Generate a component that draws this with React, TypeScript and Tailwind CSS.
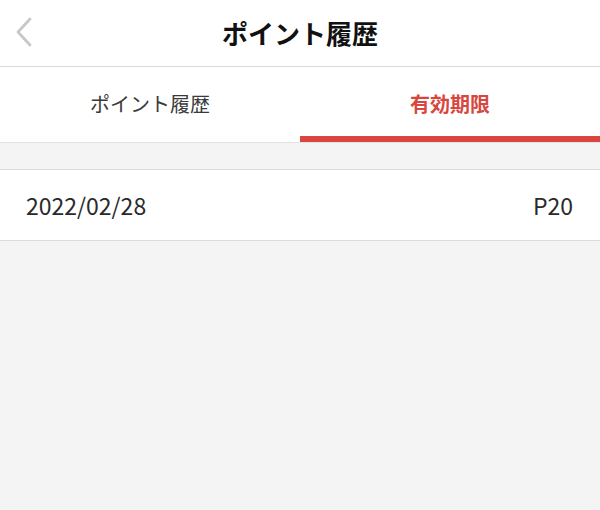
export default function App() {
  const font = { fontFamily: '"Noto Sans CJK JP", "Noto Sans", sans-serif' };

  return (
    <div className="w-[600px] h-[510px] bg-[#f4f4f4] flex flex-col" style={font}>
      {/* header */}
      <header className="h-[67px] bg-white border-b border-[#d9d9d9] flex items-center relative">
        <button className="absolute left-[12px] top-[15px] w-[24px] h-[34px] flex items-center justify-center">
          <svg width="20" height="30" viewBox="0 0 20 30" fill="none">
            <path d="M16 2 L4 15 L16 28" stroke="#c8c8c8" strokeWidth="2.8" strokeLinecap="round" strokeLinejoin="round" />
          </svg>
        </button>
        <h1 className="flex-1 text-center text-[26px] font-bold text-[#111] leading-none">ポイント履歴</h1>
      </header>

      {/* tabs */}
      <nav className="h-[76px] bg-white border-b border-[#e2e2e2] flex">
        <div className="flex-1 flex items-center justify-center text-[20px] text-[#3a3a3a] pb-[2px]">
          ポイント履歴
        </div>
        <div className="flex-1 flex flex-col">
          <div className="flex-1 flex items-center justify-center text-[20px] font-bold text-[#d8463e] pt-[4px]">
            有効期限
          </div>
          <div className="h-[6px] bg-[#d8463e]" />
        </div>
      </nav>

      <div className="h-[26px]" />

      {/* list */}
      <div className="bg-white border-y border-[#dcdcdc] h-[72px] flex items-center justify-between pl-[26px] pr-[27px] text-[23px] text-[#2a2a2a]">
        <span>2022/02/28</span>
        <span>P20</span>
      </div>
    </div>
  );
}
